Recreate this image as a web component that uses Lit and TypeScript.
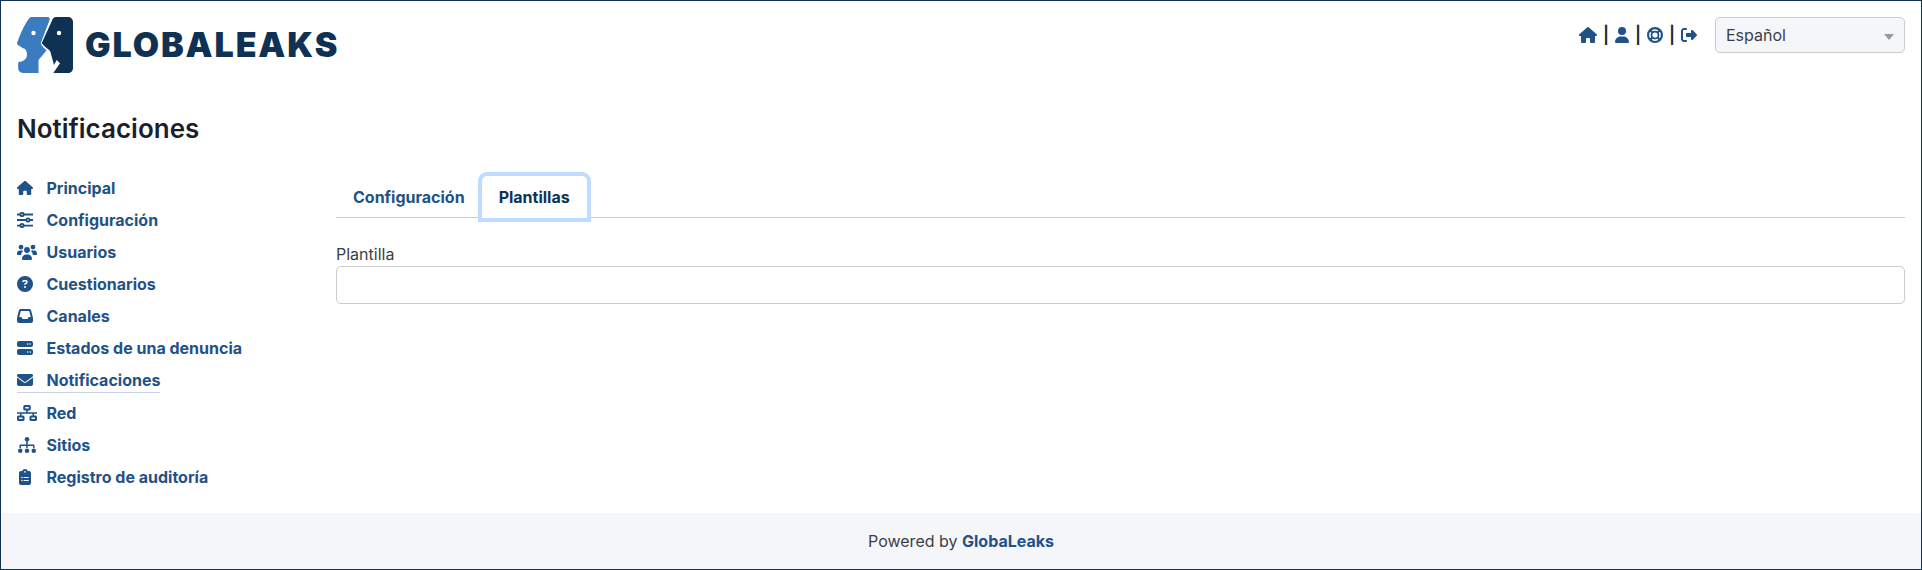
import { LitElement, html, css, svg } from "lit";
import { customElement } from "lit/decorators.js";

const ico = (vb: string, d: string) => html`<svg class="ic" viewBox=${vb} fill="currentColor"><path d=${d}></path></svg>`;
const home = "M575.8 255.5c0 18-15 32.1-32 32.1h-32l.7 160.2c0 2.7-.2 5.4-.5 8.1V472c0 22.1-17.9 40-40 40H456c-1.1 0-2.2 0-3.3-.1c-1.4 .1-2.8 .1-4.2 .1H416 392c-22.1 0-40-17.9-40-40V448 384c0-17.7-14.3-32-32-32H256c-17.7 0-32 14.3-32 32v64 24c0 22.1-17.9 40-40 40H160 128.1c-1.5 0-3-.1-4.5-.2c-1.2 .1-2.4 .2-3.6 .2H104c-22.1 0-40-17.9-40-40V360c0-.9 0-1.9 .1-2.8V287.6H32c-18 0-32-14-32-32.1c0-9 3-17 10-24L266.4 8c7-7 15-8 22-8s15 2 21 7L564.8 231.5c8 7 12 15 11 24z";
const user = "M224 256A128 128 0 1 0 224 0a128 128 0 1 0 0 256zm-45.7 48C79.8 304 0 383.8 0 482.3C0 498.7 13.3 512 29.7 512H418.3c16.4 0 29.7-13.3 29.7-29.7C448 383.8 368.2 304 269.7 304H178.3z";
const logout = "M377.9 105.9L500.7 228.7c7.2 7.2 11.3 17.1 11.3 27.3s-4.1 20.1-11.3 27.3L377.9 406.1c-6.4 6.4-15 9.9-24.1 9.9c-18.7 0-33.9-15.2-33.9-33.9l0-62.1-128 0c-17.7 0-32-14.3-32-32l0-64c0-17.7 14.3-32 32-32l128 0 0-62.1c0-18.7 15.2-33.9 33.9-33.9c9 0 17.6 3.6 24.1 9.9zM160 96L96 96c-17.7 0-32 14.3-32 32l0 256c0 17.7 14.3 32 32 32l64 0c17.7 0 32 14.3 32 32s-14.3 32-32 32l-64 0c-53 0-96-43-96-96L0 128C0 75 43 32 96 32l64 0c17.7 0 32 14.3 32 32s-14.3 32-32 32z";
const question = "M256 512A256 256 0 1 0 256 0a256 256 0 1 0 0 512zM169.8 165.3c7.9-22.3 29.1-37.3 52.8-37.3h58.3c34.9 0 63.1 28.3 63.1 63.1c0 22.6-12.1 43.5-31.7 54.8L280 264.4c-.2 13-10.9 23.6-24 23.6c-13.3 0-24-10.7-24-24V250.5c0-8.6 4.6-16.5 12.1-20.8l44.3-25.4c4.7-2.7 7.6-7.7 7.6-13.1c0-8.4-6.8-15.1-15.1-15.1H222.6c-3.4 0-6.4 2.1-7.5 5.3l-.4 1.2c-4.4 12.5-18.2 19-30.6 14.6s-19-18.2-14.6-30.6l.4-1.2zM224 352a32 32 0 1 1 64 0 32 32 0 1 1 -64 0z";
const inbox = "M121 32C91.6 32 66 52 58.9 80.5L1.9 308.4C.6 313.5 0 318.7 0 323.9V416c0 35.3 28.7 64 64 64H448c35.3 0 64-28.7 64-64V323.9c0-5.2-.6-10.4-1.9-15.5l-57-227.9C446 52 420.4 32 391 32H121zm0 64H391l48 192H387.8c-12.1 0-23.2 6.8-28.6 17.7l-14.3 28.6c-5.4 10.8-16.5 17.7-28.6 17.7H195.8c-12.1 0-23.2-6.8-28.6-17.7l-14.3-28.6c-5.4-10.8-16.5-17.7-28.6-17.7H73L121 96z";
const server = "M64 32C28.7 32 0 60.7 0 96v64c0 35.3 28.7 64 64 64H448c35.3 0 64-28.7 64-64V96c0-35.3-28.7-64-64-64H64zm280 72a24 24 0 1 1 0 48 24 24 0 1 1 0-48zm48 24a24 24 0 1 1 48 0 24 24 0 1 1 -48 0zM64 288c-35.3 0-64 28.7-64 64v64c0 35.3 28.7 64 64 64H448c35.3 0 64-28.7 64-64V352c0-35.3-28.7-64-64-64H64zm280 72a24 24 0 1 1 0 48 24 24 0 1 1 0-48zm56 24a24 24 0 1 1 48 0 24 24 0 1 1 -48 0z";
const envelope = "M48 64C21.5 64 0 85.5 0 112c0 15.1 7.1 29.3 19.2 38.4L236.8 313.6c11.4 8.5 27 8.5 38.4 0L492.8 150.4c12.1-9.1 19.2-23.3 19.2-38.4c0-26.5-21.5-48-48-48H48zM0 176V384c0 35.3 28.7 64 64 64H448c35.3 0 64-28.7 64-64V176L294.4 339.2c-22.8 17.1-54 17.1-76.8 0L0 176z";

const ring = html`<svg class="ic" viewBox="0 0 512 512" fill="none" stroke="currentColor"><circle cx="256" cy="256" r="222" stroke-width="68"></circle><circle cx="256" cy="256" r="112" stroke-width="56"></circle><path d="M95 95L175 175M417 95L337 175M95 417L175 337M417 417L337 337" stroke-width="70"></path></svg>`;
const sliders = html`<svg class="ic" viewBox="0 0 512 512" fill="none" stroke="currentColor" stroke-width="60"><path d="M0 78H100M220 78H512M0 256H290M410 256H512M0 434H100M220 434H512"></path><circle cx="160" cy="78" r="52"></circle><circle cx="350" cy="256" r="52"></circle><circle cx="160" cy="434" r="52"></circle></svg>`;
const users = html`<svg class="ic wide" viewBox="0 0 640 512" fill="currentColor"><circle cx="128" cy="96" r="76"></circle><circle cx="512" cy="96" r="76"></circle><circle cx="320" cy="190" r="94"></circle><path d="M0 300c0-50 40-90 90-90h60c18 0 34 5 48 12-40 30-64 75-64 128H22C10 350 0 340 0 328zM640 300c0-50-40-90-90-90h-60c-18 0-34 5-48 12 40 30 64 75 64 128h112c12 0 22-10 22-22zM160 470c0-73 60-134 134-134h52c74 0 134 61 134 134 0 23-19 42-42 42H202c-23 0-42-19-42-42z"></path></svg>`;
const network = html`<svg class="ic wide" viewBox="0 0 640 512" fill="none" stroke="currentColor" stroke-width="64"><rect x="232" y="32" width="176" height="112" rx="16"></rect><rect x="32" y="368" width="176" height="112" rx="16"></rect><rect x="432" y="368" width="176" height="112" rx="16"></rect><path d="M0 256H640M320 144V256M120 256V368M520 256V368" stroke-width="52"></path></svg>`;
const sitemap = html`<svg class="ic wide" viewBox="0 0 576 512" fill="currentColor"><circle cx="288" cy="72" r="72"></circle><circle cx="72" cy="440" r="72"></circle><circle cx="288" cy="440" r="72"></circle><circle cx="504" cy="440" r="72"></circle><path d="M264 130h48v110h192a24 24 0 0 1 24 24v90h-48v-66H312v66h-48v-66H96v66H48v-90a24 24 0 0 1 24-24h192z"></path></svg>`;
const clip = html`<svg class="ic" viewBox="0 0 384 512" fill="currentColor" fill-rule="evenodd"><path d="M192 0c-42 0-77 27-90 64H64C29 64 0 93 0 128v320c0 35 29 64 64 64h256c35 0 64-29 64-64V128c0-35-29-64-64-64h-38C269 27 234 0 192 0zM192 60a28 28 0 1 1 0 56 28 28 0 1 1 0-56zM72 272a24 24 0 1 1 48 0 24 24 0 1 1-48 0zM160 256h136a16 16 0 0 1 0 32H160a16 16 0 0 1 0-32zM72 368a24 24 0 1 1 48 0 24 24 0 1 1-48 0zM160 352h136a16 16 0 0 1 0 32H160a16 16 0 0 1 0-32z"></path></svg>`;

const logo = svg`<path fill="#3a7cbf" d="M12 1.5C12.8 .5 14 0 15.5 0H30.5C32.5 0 33.2 1.8 32.4 3.5L23.7 26.3C24.5 28.5 27 31.5 29.7 33.2L21.5 43V56H6C3 56 1.2 54 1.2 51.3V46C1.2 45.2 1.8 44.8 2.6 44.8 4.5 44.8 6 44 7.3 43 10.8 41 10.8 35 8 32L5.7 31C3.5 29.5 0 28 0 26.3 2 20 7 8 12 1.5Z"></path><circle fill="#fff" cx="16.5" cy="16" r="2.2"></circle><path fill="#0f3254" d="M35.7 2C36.4 .7 37.3 0 39 0H51C53.8 0 56 2 56 5V51C56 54 53.8 56 51 56H36.3L43 46.3 39.7 43 37 48 34 37C33.6 34.5 32.5 33 30.5 31.8 28.5 30.5 26.5 28.2 24.7 26.3 28 19 32 10 35.7 2Z"></path><circle fill="#fff" cx="42" cy="16" r="2.2"></circle>`;

const items: [string, unknown][] = [
  ["Principal", ico("0 0 576 512", home)],
  ["Configuración", sliders],
  ["Usuarios", users],
  ["Cuestionarios", ico("0 0 512 512", question)],
  ["Canales", ico("0 0 512 512", inbox)],
  ["Estados de una denuncia", ico("0 0 512 512", server)],
  ["Notificaciones", ico("0 0 512 512", envelope)],
  ["Red", network],
  ["Sitios", sitemap],
  ["Registro de auditoría", clip],
];

@customElement("app-root")
export class AppRoot extends LitElement {
  static styles = css`
    :host { display: block; font-family: Inter, "Liberation Sans", sans-serif; font-size: 16px; line-height: 24px; color: #212529; }
    * { box-sizing: border-box; }
    .page { height: 570px; border: 1px solid #0f3254; display: flex; flex-direction: column; background: #fff; }
    .top { height: 72px; padding: 16px 16px 0; display: flex; justify-content: space-between; align-items: flex-start; }
    .brand { display: flex; align-items: center; gap: 12px; height: 56px; }
    .brand svg { width: 56px; height: 56px; display: block; }
    .brand span { font-weight: 900; font-size: 34px; letter-spacing: 1.9px; color: #0f3254; line-height: 56px; }
    .right { display: flex; align-items: flex-start; gap: 18px; }
    .links { display: flex; align-items: center; height: 36px; color: #1f5288; }
    .links .ic { height: 16px; width: auto; display: block; }
    .links .sep { color: #212529; width: 18px; text-align: center; font-weight: 600; font-size: 17px; }
    .select { width: 190px; height: 36px; border: 1px solid #ccc; border-radius: 5px; background: #f5f6fa; padding: 0 10px; display: flex; align-items: center; justify-content: space-between; color: #3a3f47; }
    .select i { width: 0; height: 0; border-left: 5px solid transparent; border-right: 5px solid transparent; border-top: 6px solid #9a9a9a; margin-top: 3px; }
    h1 { margin: 0; padding: 38px 16px 0; font-size: 26px; line-height: 36px; font-weight: 600; color: #1c1f2b; }
    .main { flex: 1; display: flex; padding: 0 16px; min-height: 0; }
    nav { width: 319px; flex: none; padding-top: 25px; display: flex; flex-direction: column; align-items: flex-start; }
    nav a { height: 24px; margin: 4px 0; display: flex; align-items: center; font-weight: 700; color: #1f5288; font-size: 16px; white-space: nowrap; }
    nav a .w { width: 29.5px; flex: none; display: flex; align-items: center; }
    nav a .ic { width: 16px; height: 16px; display: block; }
    nav a .ic.wide { width: 20px; }
    nav a.on { height: 25px; border-bottom: 1px solid #c5d3e3; }
    .content { flex: 1; min-width: 0; padding-top: 29px; }
    .tabs { display: flex; height: 42px; border-bottom: 1px solid #ccc; }
    .tab { height: 42px; padding: 0 17px; display: flex; align-items: center; font-weight: 700; color: #1f5288; font-size: 16px; }
    .tab.on { color: #0f3254; background: #fff; border-radius: 5px 5px 0 0; box-shadow: 0 0 0 4px #bfdbfe; }
    label { display: block; margin-top: 24px; font-size: 16px; line-height: 24px; color: #3a3f47; }
    .input { height: 38px; border: 1px solid #ccc; border-radius: 5px; background: #fff; }
    footer { height: 56px; background: #f5f6fa; display: flex; align-items: center; justify-content: center; font-size: 16px; }
    footer p { margin: 0; color: #3a3f47; }
    footer b { font-weight: 700; color: #1f5288; }
  `;

  render() {
    return html`<div class="page">
      <div class="top">
        <div class="brand"><svg viewBox="0 0 56 56">${logo}</svg><span>GLOBALEAKS</span></div>
        <div class="right">
          <div class="links">
            ${ico("0 0 576 512", home)}<span class="sep">|</span>
            ${ico("0 0 448 512", user)}<span class="sep">|</span>
            ${ring}<span class="sep">|</span>
            ${ico("0 0 512 512", logout)}
          </div>
          <div class="select"><span>Español</span><i></i></div>
        </div>
      </div>
      <h1>Notificaciones</h1>
      <div class="main">
        <nav>
          ${items.map(([t, i]) => html`<a class=${t === "Notificaciones" ? "on" : ""}><span class="w">${i}</span>${t}</a>`)}
        </nav>
        <div class="content">
          <div class="tabs"><div class="tab">Configuración</div><div class="tab on">Plantillas</div></div>
          <label>Plantilla</label>
          <div class="input"></div>
        </div>
      </div>
      <footer><p>Powered by <b>GlobaLeaks</b></p></footer>
    </div>`;
  }
}
